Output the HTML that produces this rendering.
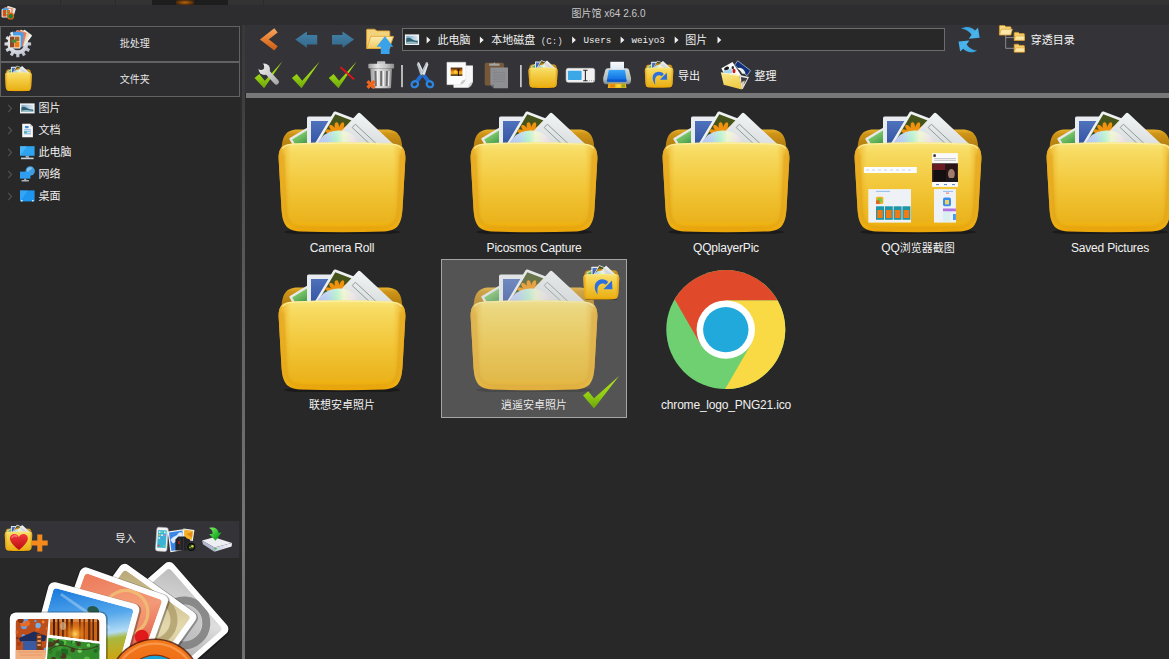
<!DOCTYPE html>
<html lang="zh-CN">
<head>
<meta charset="utf-8">
<title>图片馆 x64 2.6.0</title>
<style>
*{box-sizing:border-box;margin:0;padding:0}
html,body{width:1169px;height:659px;overflow:hidden;background:#2d2d30}
body{position:relative;font-family:"Liberation Sans","Noto Sans CJK SC",sans-serif;color:#f1f1f1;font-size:12px}
.abs{position:absolute}
#topstrip{left:0;top:0;width:1169px;height:5px;background:linear-gradient(#333 0,#333 4px,#303032 5px)}
#topstrip i{position:absolute;top:0;height:4.5px}
#title{left:0;top:5px;width:1169px;height:20px;background:#2d2d30}
#title .t{position:absolute;left:0;width:1169px;top:2.2px;line-height:14px;text-align:center;font-size:10px;color:#c8c8c8;padding-left:48px}
#left{left:0;top:25px;width:242px;height:634px;background:linear-gradient(#2d2d30 0,#2d2d30 73px,#2b2b2b 73px)}
.bigbtn{position:absolute;left:0;width:240px;height:35px;border:1px solid #626262;background:#2d2d30}
.bigbtn .lbl{position:absolute;left:0;width:267.5px;text-align:center;top:10px;line-height:14px;font-size:10px;color:#e6e6e6}
#tree{left:0;top:97px;width:240px;height:424px;background:#282828}
.ti{position:absolute;left:0;height:22px;width:241px}
.ti .arr{position:absolute;left:7px;top:7px;width:5px;height:8px}
.ti .ic{position:absolute;left:20px;top:3px;width:16px;height:16px}
.ti .tx{position:absolute;left:38.6px;top:3.4px;font-size:11px;line-height:16px;color:#f1f1f1}
#import{left:0;top:521px;width:239px;height:37px;background:#343438}
#logo{left:0;top:558px;width:240px;height:101px;background:#282828;overflow:hidden}
#split{left:242px;top:25px;width:3px;height:634px;background:linear-gradient(#38383a 0%,#3e3e40 12%,#505050 28%,#646464 50%,#767676 80%,#6e6e6e 100%)}
#main{left:245px;top:25px;width:924px;height:634px;background:#282828}
#tb{left:245px;top:25px;width:924px;height:68px;background:#343438}
#tbbar{left:246px;top:93px;width:923px;height:5px;background:#787878}
#addr{left:402px;top:28px;width:543px;height:23px;border:1px solid #6c6c6c;background:#282828}
.cell{position:absolute;width:186px;height:159px}
.cell .nm{position:absolute;left:0;width:186px;top:140px;text-align:center;font-size:12px;letter-spacing:-0.2px;color:#f1f1f1;line-height:14px;white-space:nowrap}
.cell svg.f{position:absolute;left:27px;top:3px;width:132px;height:130px}
.selov{background:rgba(204,204,204,0.27);border:1px solid #a4a4a4}

#addrtx .a{position:absolute;top:32px;line-height:16px;white-space:nowrap;color:#f0f0f0}
.c{font-size:11px;font-family:"Liberation Sans","Noto Sans CJK SC",sans-serif}
.m{color:#dcdcdc;font-size:9.2px;font-family:"Liberation Mono","Noto Sans CJK SC",monospace}
#addrtx .a.m{top:32.5px}
.tbl{font-size:11px;line-height:16px;color:#f2f2f2;white-space:nowrap}
.cj{font-size:11px !important;letter-spacing:0 !important}
.r2 .nm{top:139.2px}
</style>
</head>
<body>
<svg width="0" height="0" style="position:absolute">
<defs>
<linearGradient id="gFront" x1="0" y1="0" x2="0" y2="1">
<stop offset="0" stop-color="#fae67e"/><stop offset="0.1" stop-color="#f7db62"/><stop offset="0.5" stop-color="#f2c638"/><stop offset="0.86" stop-color="#eab41e"/><stop offset="0.93" stop-color="#f1b210"/><stop offset="1" stop-color="#eaa308"/>
</linearGradient>
<linearGradient id="gFrontSide" x1="0" y1="0" x2="1" y2="0">
<stop offset="0" stop-color="#e59a0c" stop-opacity="0.85"/><stop offset="0.1" stop-color="#eeb020" stop-opacity="0"/><stop offset="0.9" stop-color="#eeb020" stop-opacity="0"/><stop offset="1" stop-color="#e59a0c" stop-opacity="0.85"/>
</linearGradient>
<linearGradient id="gBack" x1="0" y1="0" x2="0" y2="1">
<stop offset="0" stop-color="#e8b22c"/><stop offset="0.12" stop-color="#cf9418"/><stop offset="0.5" stop-color="#b07a0c"/><stop offset="1" stop-color="#8a5804"/>
</linearGradient>
<linearGradient id="gCD" x1="0" y1="0" x2="1" y2="0">
<stop offset="0" stop-color="#b9b4e6"/><stop offset="0.25" stop-color="#a9c6f0"/><stop offset="0.45" stop-color="#a6ecc2"/><stop offset="0.6" stop-color="#e9f3c4"/><stop offset="0.78" stop-color="#eadfe0"/><stop offset="1" stop-color="#cfd2d6"/>
</linearGradient>
<linearGradient id="gCDfade" x1="0" y1="0" x2="0" y2="1">
<stop offset="0" stop-color="#fff" stop-opacity="0.35"/><stop offset="0.4" stop-color="#fff" stop-opacity="0"/>
</linearGradient>
<linearGradient id="gBlue" x1="0" y1="0" x2="0" y2="1">
<stop offset="0" stop-color="#4f72bd"/><stop offset="1" stop-color="#2f4f9c"/>
</linearGradient>
<linearGradient id="gGreen" x1="0" y1="0" x2="0" y2="1">
<stop offset="0" stop-color="#7cc66a"/><stop offset="1" stop-color="#1f7a34"/>
</linearGradient>
<linearGradient id="gDoc" x1="0" y1="0" x2="1" y2="1">
<stop offset="0" stop-color="#f2f5f5"/><stop offset="1" stop-color="#c3c9c9"/>
</linearGradient>
<filter id="fBlur" x="-10%" y="-10%" width="120%" height="120%"><feGaussianBlur stdDeviation="1.3"/></filter>
<clipPath id="cdClip"><rect x="30" y="20" width="70" height="20"/></clipPath>
<clipPath id="flClip"><rect x="2.6" y="2.6" width="28.8" height="34"/></clipPath>
<symbol id="folder" viewBox="0 0 132 130">
<ellipse cx="66" cy="128" rx="58" ry="3.5" fill="#000" opacity="0.35"/>
<path d="M5.5 54 C5 34 8 25.5 22 25.5 L110 25.5 C124 25.5 127 34 126.5 54 L126.5 62 L5.5 62 Z" fill="url(#gBack)"/>
<g transform="translate(13 34.6) rotate(-31)"><rect width="24" height="22" rx="1" fill="#e4eaea"/><rect x="2.3" y="2.3" width="21" height="18" fill="url(#gGreen)"/></g>
<rect x="31" y="12.6" width="26" height="34" rx="1.6" fill="#e8ecf0"/><rect x="35" y="17" width="22" height="28" fill="url(#gBlue)"/>
<g transform="matrix(0.934 0.358 -0.508 0.862 58.2 7)"><rect width="34" height="40" rx="1.6" fill="#eef1f1"/><rect x="2.6" y="2.6" width="28.8" height="34" fill="#46541c"/><g clip-path="url(#flClip)" fill="#f0920e"><ellipse cx="7.4" cy="21.5" rx="5.6" ry="2.1" transform="rotate(180 7.4 21.5)"/><ellipse cx="8.3" cy="17.6" rx="5.6" ry="2.1" transform="rotate(207 8.3 17.6)"/><ellipse cx="10.9" cy="14.5" rx="5.6" ry="2.1" transform="rotate(234 10.9 14.5)"/><ellipse cx="14.7" cy="13.0" rx="5.6" ry="2.1" transform="rotate(261 14.7 13.0)"/><ellipse cx="18.7" cy="13.3" rx="5.6" ry="2.1" transform="rotate(288 18.7 13.3)"/><ellipse cx="22.1" cy="15.4" rx="5.6" ry="2.1" transform="rotate(315 22.1 15.4)"/><circle cx="16" cy="21.5" r="3.6" fill="#c96a08"/></g></g>
<g transform="translate(83.8 8.8) rotate(43)"><rect x="-1" width="52" height="34" rx="2" fill="url(#gDoc)"/><path d="M4.5 11.4H34M4.5 16H34M4.5 11.4V16" stroke="#8e9696" stroke-width="0.9" fill="none"/></g>
<g clip-path="url(#cdClip)"><circle cx="62.7" cy="51.1" r="24.6" fill="url(#gCD)"/><circle cx="62.7" cy="51.1" r="24.6" fill="url(#gCDfade)"/></g>
<path d="M2.6 54 C2.6 44 6 40 16 39.4 Q66 37.3 116 39.4 C126 40 129.4 44 129.4 54 L126.8 100 C126 119 123 126.8 108 127.4 Q66 129 24 127.4 C9 126.8 6 119 5.2 100 Z" fill="url(#gFront)"/>
<path d="M2.6 54 C2.6 44 6 40 16 39.4 Q66 37.3 116 39.4 C126 40 129.4 44 129.4 54 L126.8 100 C126 119 123 126.8 108 127.4 Q66 129 24 127.4 C9 126.8 6 119 5.2 100 Z" fill="url(#gFrontSide)"/>
<path d="M7 50 L9.4 100 C10 116 12 122.6 25 123.2 Q66 124.6 107 123.2 C120 122.6 122 116 122.6 100 L125 50" fill="none" stroke="#d89a14" stroke-width="2.2" opacity="0.55" filter="url(#fBlur)"/>
<path d="M6.5 44.5 C8.5 41.5 11 40.6 16 40.2 Q66 38.1 116 40.2 C121 40.6 123.5 41.5 125.5 44.5" stroke="#fdf2a8" stroke-width="1.1" fill="none" opacity="0.9"/>
</symbol>
</defs>
</svg>

<div id="topstrip" class="abs"><i style="left:60px;width:1px;background:#2a2a2a"></i><i style="left:115px;width:1px;background:#2a2a2a"></i><i style="left:263px;width:1px;background:#2a2a2a"></i><i style="left:152px;width:76px;background:#1d1d1d"></i><i style="left:176px;width:18px;background:radial-gradient(#b8640e,#4a2a0a 70%,#1d1d1d)"></i></div>
<div id="title" class="abs"><div class="t">图片馆 x64 2.6.0</div></div>

<div id="left" class="abs">
  <div class="bigbtn" style="top:1px;height:36px"><div class="lbl">批处理</div></div>
  <div class="bigbtn" style="top:37px"><div class="lbl">文件夹</div></div>
</div>
<div id="tree" class="abs">
  <div class="ti" style="top:0"><div class="tx">图片</div></div>
  <div class="ti" style="top:22px"><div class="tx">文档</div></div>
  <div class="ti" style="top:44px"><div class="tx">此电脑</div></div>
  <div class="ti" style="top:66px"><div class="tx">网络</div></div>
  <div class="ti" style="top:88px"><div class="tx">桌面</div></div>
</div>
<div id="import" class="abs"><div class="abs" style="left:115.4px;top:10.5px;font-size:10px;line-height:14px;color:#f1f1f1">导入</div></div>
<div id="logo" class="abs"></div>
<div id="split" class="abs"></div>

<div id="main" class="abs"></div>
<div id="tb" class="abs"></div>
<div id="tbbar" class="abs"></div>
<div id="addr" class="abs"></div>




<div id="addrtx">
<span class="a c" style="left:437.4px">此电脑</span>
<span class="a c" style="left:491.2px">本地磁盘<span class="m"> (C:)</span></span>
<span class="a m" style="left:583.6px">Users</span>
<span class="a m" style="left:631.6px">weiyo3</span>
<span class="a c" style="left:685.2px">图片</span>
</div>
<div class="abs tbl" style="left:678px;top:68px">导出</div>
<div class="abs tbl" style="left:754.4px;top:68px">整理</div>
<div class="abs tbl" style="left:1030.8px;top:32px">穿透目录</div>
<div id="grid">
<div class="cell" style="left:249px;top:101px"><svg class="f"><use href="#folder"/></svg><div class="nm">Camera Roll</div></div>
<div class="cell" style="left:441px;top:101px"><svg class="f"><use href="#folder"/></svg><div class="nm">Picosmos Capture</div></div>
<div class="cell" style="left:633px;top:101px"><svg class="f"><use href="#folder"/></svg><div class="nm">QQplayerPic</div></div>
<div class="cell" style="left:825px;top:101px"><svg class="f"><use href="#folder"/></svg><div class="nm">QQ<span class="cj">浏览器截图</span></div></div>
<div class="cell" style="left:1017px;top:101px"><svg class="f"><use href="#folder"/></svg><div class="nm">Saved Pictures</div></div>
<div class="cell r2" style="left:249px;top:259px"><svg class="f"><use href="#folder"/></svg><div class="nm cj">联想安卓照片</div></div>
<div class="cell r2" style="left:441px;top:259px"><svg class="f"><use href="#folder"/></svg><div class="nm cj">逍遥安卓照片</div></div>
<div class="cell r2" style="left:633px;top:259px"><div class="nm">chrome_logo_PNG21.ico</div></div>
</div>
<div class="abs selov" style="left:440.6px;top:259.1px;width:186.8px;height:159px"></div>
<svg id="ov" class="abs" style="left:0;top:0" width="1169" height="659" viewBox="0 0 1169 659">
<defs>
<linearGradient id="gChev" gradientUnits="userSpaceOnUse" x1="0" y1="28" x2="0" y2="51"><stop offset="0" stop-color="#f4a862"/><stop offset="0.5" stop-color="#e67e30"/><stop offset="1" stop-color="#c95a12"/></linearGradient>
<linearGradient id="gCheck" gradientUnits="userSpaceOnUse" x1="0" y1="61" x2="0" y2="89"><stop offset="0" stop-color="#b4e420"/><stop offset="0.6" stop-color="#90cc12"/><stop offset="1" stop-color="#6aa20a"/></linearGradient>
<linearGradient id="gArr" gradientUnits="userSpaceOnUse" x1="0" y1="31" x2="0" y2="48"><stop offset="0" stop-color="#4382a8"/><stop offset="1" stop-color="#34688a"/></linearGradient>
<linearGradient id="gFold2" x1="0" y1="0" x2="0" y2="1"><stop offset="0" stop-color="#fcecb2"/><stop offset="1" stop-color="#f1c860"/></linearGradient>
<linearGradient id="gTrash" x1="0" y1="0" x2="1" y2="0"><stop offset="0" stop-color="#9c9c9c"/><stop offset="0.35" stop-color="#e4e4e4"/><stop offset="0.7" stop-color="#c4c4c4"/><stop offset="1" stop-color="#8c8c8c"/></linearGradient>
<linearGradient id="gSilver" x1="0" y1="0" x2="1" y2="1"><stop offset="0" stop-color="#f2f2f2"/><stop offset="1" stop-color="#9a9a9a"/></linearGradient>
<linearGradient id="gPrBlue" x1="0" y1="0" x2="0" y2="1"><stop offset="0" stop-color="#36a6fa"/><stop offset="1" stop-color="#0a64dc"/></linearGradient>
<linearGradient id="gSun" x1="0" y1="0" x2="0" y2="1"><stop offset="0" stop-color="#3a1c04"/><stop offset="0.45" stop-color="#f08a10"/><stop offset="0.7" stop-color="#f6b020"/><stop offset="1" stop-color="#1c0c02"/></linearGradient>
</defs>
<!-- row 1 -->
<path d="M276 30.4 L264.4 39.4 L276 48.4" fill="none" stroke="url(#gChev)" stroke-width="5.5" stroke-linejoin="miter"/>
<polygon points="295.3,39.6 306.9,31.5 306.9,35 317.2,35 317.2,44.4 306.9,44.4 306.9,47.8" fill="url(#gArr)"/>
<polygon points="354.1,39.6 342.5,31.5 342.5,35 332,35 332,44.4 342.5,44.4 342.5,47.8" fill="url(#gArr)"/>
<g>
<path d="M366.6 48.4 V30 Q366.6 29.2 367.4 29.2 H374.4 L377.2 30.9 H389 Q389.8 30.9 389.8 31.7 V48.4 Z" fill="#f3d27c" stroke="#e0a030" stroke-width="0.8"/>
<path d="M370.8 36.4 H393.6 L389.2 48.5 H366.9 Z" fill="url(#gFold2)" stroke="#e3a434" stroke-width="0.8" stroke-linejoin="round"/>
<polygon points="384.9,36.3 393.3,46.8 389.6,46.8 389.6,54.1 380.8,54.1 380.8,46.8 376.6,46.8" fill="#3aa2ea"/>
</g>
<!-- row 2 -->
<polygon points="254.5,78.1 259.3,74.0 264.8,80.8 282.3,61.6 264.1,88.3" fill="url(#gCheck)"/>
<g><defs><mask id="mWr" maskUnits="userSpaceOnUse" x="250" y="58" width="40" height="36"><rect x="250" y="58" width="40" height="36" fill="#fff"/><circle cx="261" cy="66.7" r="3.2" fill="#000"/></mask>
<linearGradient id="gWr" gradientUnits="userSpaceOnUse" x1="260" y1="64" x2="278" y2="84"><stop offset="0" stop-color="#f0f0f0"/><stop offset="0.5" stop-color="#cfcfcf"/><stop offset="1" stop-color="#a6a6a6"/></linearGradient></defs>
<g mask="url(#mWr)"><path d="M266.6 71.4 L276.4 81.9" stroke="url(#gWr)" stroke-width="5.2" stroke-linecap="round"/><circle cx="264.3" cy="69.3" r="5.7" fill="url(#gWr)"/></g></g>
<polygon points="291.9,78.1 296.7,74.0 302.2,80.8 319.7,61.6 301.5,88.3" fill="url(#gCheck)"/>
<polygon points="328.8,78.1 333.6,74.0 339.1,80.8 356.6,61.6 338.4,88.3" fill="url(#gCheck)"/>
<path d="M340.4 67.1 L354.1 79.4" stroke="#ea0f1e" stroke-width="1.9"/>
<g>
<rect x="377" y="61.2" width="8.3" height="3" rx="0.8" fill="#c4c4c4"/>
<rect x="368.3" y="63.8" width="25.8" height="4.6" rx="1" fill="url(#gTrash)"/>
<path d="M370.3 68.6 H392 L391 87.6 Q391 88.3 390.2 88.3 H372.2 Q371.4 88.3 371.4 87.6 Z" fill="url(#gTrash)"/>
<path d="M375.4 71 L375.8 86 M381.2 71 V86 M387 71 L386.6 86" stroke="#6e6e6e" stroke-width="2"/>
<path d="M377.6 71 L377.9 86 M383.4 71 V86 M389 71 L388.6 86" stroke="#f6f6f6" stroke-width="1"/>
<path d="M367.4 81.2 L374.6 87.8 M374.6 81.2 L367.4 87.8" stroke="#f0641c" stroke-width="3.2"/>
</g>
<rect x="401.2" y="65" width="1.6" height="22.2" fill="#d6d6d6"/>
<!-- scissors -->
<g>
<path d="M417.9 62 L416.9 64.5 L420.6 75.5 L424.4 73.4 L419.2 62.6 Z" fill="#b4bcc6"/>
<path d="M418.4 62.6 L423.6 73.6" stroke="#f2f4f6" stroke-width="0.8"/>
<path d="M427.3 62 L428.3 64.5 L424.6 75.5 L420.8 73.4 L426 62.6 Z" fill="#dde2e8"/>
<path d="M426.6 63.4 L422 73.4" stroke="#8e98a4" stroke-width="0.7"/>
<path d="M421.4 75.4 L416.8 81.2" stroke="#1f6cd2" stroke-width="3.8"/>
<path d="M423.8 75.4 L428.4 81.2" stroke="#1f6cd2" stroke-width="3.8"/>
<ellipse cx="414.8" cy="84.2" rx="3.3" ry="2.9" fill="none" stroke="#2b86e4" stroke-width="2.2" transform="rotate(-30 414.8 84.2)"/>
<ellipse cx="429.9" cy="84.2" rx="3.3" ry="2.9" fill="none" stroke="#2b86e4" stroke-width="2.2" transform="rotate(30 429.9 84.2)"/>
<circle cx="422.6" cy="75" r="0.9" fill="#7a8692"/>
</g>
<!-- copy -->
<g>
<path d="M453.5 65.6 H472.9 V82 Q470 83.5 468.4 87.8 H453.5 Z" fill="#f7f7f7"/>
<path d="M472.9 82 Q468.6 82.4 468.4 87.8 Q471.6 86.6 472.9 82Z" fill="#cfcfcf"/>
<path d="M446.9 62.2 H465.8 V79.4 Q462.6 80.6 460.4 84.7 H446.9 Z" fill="#fdfdfd" stroke="#d8d8d8" stroke-width="0.4"/>
<path d="M465.8 79.4 Q461 79.6 460.4 84.7 Q464 83.6 465.8 79.4Z" fill="#c8c8c8"/>
<rect x="450.7" y="67.6" width="11.7" height="8.2" fill="url(#gSun)"/>
<circle cx="455.4" cy="71.8" r="1.6" fill="#ffd23a"/>
<path d="M458.5 75.8 V69.5 M457 70.2 L458.5 69.5 L460.3 70.3" stroke="#1c0c02" stroke-width="0.9" fill="none"/>
</g>
<!-- clipboard -->
<g>
<rect x="484.7" y="62.8" width="19.4" height="22.6" rx="1.6" fill="#75583a"/>
<path d="M489.2 65.8 V63.6 H493.4 Q494.4 61.2 495.4 63.6 H499.6 V65.8 Z" fill="#a4a4a4"/>
<path d="M490.4 67.6 H508 V88.2 H494 L490.4 84.8 Z" fill="#8d8f93"/>
<path d="M490.4 84.8 H494 V88.2 Z" fill="#6e7074"/>
<path d="M493 70.4 H497 M493 72.6 H505 M493 74.8 H505 M493 77 H505 M493 79.2 H505 M493 81.4 H505" stroke="#7c7e84" stroke-width="0.6"/>
</g>
<rect x="520.1" y="65" width="1.6" height="22.2" fill="#d6d6d6"/>
<!-- folder small -->
<use href="#folder" x="527.9" y="58.6" width="30.3" height="29.8"/>
<!-- rename -->
<g>
<rect x="566.1" y="68.3" width="28.6" height="14" rx="2.2" fill="#f1f1f1" stroke="#cfcfcf" stroke-width="0.6"/>
<rect x="567.9" y="70.7" width="13.7" height="9.4" rx="0.8" fill="#3aa8e6"/>
<path d="M585.4 70.4 V80.6 M583.2 70.2 H587.6 M583.2 80.8 H587.6" stroke="#2c2c2c" stroke-width="1.1"/>
<path d="M589 80.6 H590 M591 80.6 H592 M593 80.6 H594" stroke="#9a9a9a" stroke-width="0.8"/>
</g>
<!-- printer -->
<g>
<defs><linearGradient id="gPrBody" x1="0" y1="0" x2="0" y2="1"><stop offset="0" stop-color="#d4dcdc"/><stop offset="0.7" stop-color="#aebaba"/><stop offset="1" stop-color="#7c8888"/></linearGradient>
<linearGradient id="gPaper" x1="0" y1="0" x2="0" y2="1"><stop offset="0" stop-color="#fafafa"/><stop offset="1" stop-color="#dceaf4"/></linearGradient></defs>
<path d="M607.6 68.3 H627 Q628.4 68.3 629 69.8 L631 77.8 Q631.6 84 628.4 84.2 H605.8 Q602.6 84 603.2 77.8 L605.4 69.8 Q606 68.3 607.6 68.3Z" fill="url(#gPrBody)"/>
<path d="M610.3 61.8 H624 V69.4 H610.3 Z" fill="url(#gPaper)"/>
<path d="M609.6 70 H624.4 Q625 70 625.2 70.8 L626.5 80.6 Q626.6 81.8 625.4 81.8 H608 Q606.8 81.8 606.9 80.6 L608.6 70.8 Q608.8 70 609.6 70Z" fill="url(#gPrBlue)"/>
<path d="M607.2 79.4 H626.2 L626.5 80.6 Q626.6 81.8 625.4 81.8 H608 Q606.8 81.8 606.9 80.6Z" fill="#0c58cc"/>
<path d="M608.4 83.6 H625.8 L626.4 88 H607.8 Z" fill="#f0b41c"/>
<path d="M610 84.2 H615 L614.6 87.6 H609.6Z" fill="#e8860c"/><path d="M616.4 84.2 H620.4 L620.6 87.6 H616.2Z" fill="#f4d83a"/><path d="M621.6 84.2 H624.8 L625.2 87.6 H621.8Z" fill="#8aa82a"/>
<circle cx="628.2" cy="76" r="0.7" fill="#b6e23a"/>
</g>
<!-- export folder -->
<use href="#folder" x="644.2" y="59" width="29.7" height="29.2"/>
<g>
<path d="M655.2 84.8 C651.8 80 651.8 74.6 655.6 72.6 C658.6 71 661.8 71.8 663.8 74 L661.8 76.2 C660.4 75 658.4 74.8 657 75.8 C654.8 77.4 654.8 80.6 655.2 84.8 Z" fill="#2d6fe0"/>
<polygon points="666.8,72.7 667.1,79.7 659.9,79.7" fill="#2d6fe0"/>
</g>

<!-- organize icon -->
<g>
<polygon points="721.4,68.3 732.5,61.9 741.4,75.8 725,76" fill="#fbfbfb"/>
<ellipse cx="726.6" cy="68.6" rx="2.6" ry="1.7" fill="#1a1a1a" transform="rotate(-25 726.6 68.6)"/>
<polygon points="723.4,71 731.5,68.6 732.4,73 724.4,75" fill="#a8d4f0"/>
<ellipse cx="734" cy="71" rx="1.5" ry="2.2" fill="#c41a1a"/><ellipse cx="732.8" cy="67.6" rx="1.2" ry="1.6" fill="#2a2a2a"/>
<polygon points="734.6,65.2 737.7,60.8 750.6,70.6 747,75.7" fill="#10307a" stroke="#c8cce0" stroke-width="0.7"/>
<path d="M737.2 68.6 C740.2 66.2 744 68.6 745.6 73.4 L742.2 73.8 C741 71 739.4 69.8 737.2 68.6Z" fill="#f1f1ec"/>
<polygon points="739.2,75 749,77.1 742.8,89 741.2,88.8" fill="#e8e8e8"/>
<polygon points="741,77 747.4,78.2 744,84 741.4,82.8" fill="#3a3a40"/>
<polygon points="741.6,82 745,80.4 742.6,88 741.6,87.6" fill="#d8c8a8"/>
<polygon points="720.9,72.5 739.2,75 741.8,89.5 723.7,84.8" fill="url(#gFold3)"/><defs><linearGradient id="gFold3" x1="0" y1="0" x2="0.3" y2="1"><stop offset="0" stop-color="#fbe98c"/><stop offset="1" stop-color="#f0cc48"/></linearGradient></defs>
<polygon points="720.9,72.5 739.2,75 739.4,76.2 721.1,73.6" fill="#fdf3c0"/>
</g>
<!-- refresh -->
<defs><linearGradient id="gRef" gradientUnits="userSpaceOnUse" x1="958" y1="27" x2="981" y2="52"><stop offset="0" stop-color="#2f98d8"/><stop offset="0.5" stop-color="#4ab6ec"/><stop offset="1" stop-color="#2f98d8"/></linearGradient></defs>
<g fill="url(#gRef)">
<path id="refA" d="M961.2 28.8 C965.4 25.8 971.4 26.4 975 30.4 L978 27.8 L979.7 37.7 L968.8 38.8 L971.6 34.8 C969 31 965.4 29.2 961.2 28.8 Z"/>
<path d="M961.2 28.8 C965.4 25.8 971.4 26.4 975 30.4 L978 27.8 L979.7 37.7 L968.8 38.8 L971.6 34.8 C969 31 965.4 29.2 961.2 28.8 Z" transform="rotate(180 969.1 39.6)"/>
</g>
<!-- folder tree -->
<g>
<path d="M1005.7 35 V48.3 H1014 M1005.7 37.6 H1014" fill="none" stroke="#8c8c8c" stroke-width="1"/>
<path d="M999.4 34.8 V26.2 Q999.4 25.5 1000.1 25.5 H1004.6 L1005.8 26.8 H1010.4 Q1011 26.8 1011 27.4 V34.8 Z" fill="#f6d77c" stroke="#d9992a" stroke-width="0.7"/>
<path d="M1001.4 29.2 H1012.4 L1010.6 34.9 H999.5 Z" fill="#fbe9ae" stroke="#dda030" stroke-width="0.7" stroke-linejoin="round"/>
<g id="sf1"><path d="M1014.2 40.3 V33 Q1014.2 32.4 1014.8 32.4 H1018.4 L1019.4 33.6 H1023.8 Q1024.4 33.6 1024.4 34.2 V40.3 Z" fill="#f4cf6a" stroke="#d9992a" stroke-width="0.7"/>
<path d="M1015.6 36 H1024.4 V40.3 H1014.3 Z" fill="#fbe7a4" stroke="#dda030" stroke-width="0.6" stroke-linejoin="round"/></g>
<use href="#sf1" y="11.8"/>
</g>
<!-- address icon + arrows -->
<g>
<rect x="404.9" y="34.4" width="14.2" height="10.6" fill="#f2f2f2"/>
<rect x="406.3" y="35.8" width="11.4" height="7.6" fill="url(#gSkyS)"/>
<path d="M406.3 38.6 Q409.4 36.6 412.4 39.4 Q415 40.8 417.7 40.6 V43.4 H406.3Z" fill="#2e6272"/>
<path d="M406.3 42 Q411 40.8 417.7 42.4 V43.4 H406.3Z" fill="#9cc0c8"/>
<g fill="#f0f0f0"><path id="tri" d="M426.6 36.6 L430.4 40 L426.6 43.4Z"/><use href="#tri" x="53.3"/><use href="#tri" x="145.5"/><use href="#tri" x="194"/><use href="#tri" x="248.1"/><use href="#tri" x="290.9"/></g>
</g>

<!-- app icon -->
<g>
<rect x="6" y="6.8" width="9" height="8" rx="0.8" fill="#e8e8e8" transform="rotate(18 10 11)"/>
<rect x="4" y="7.6" width="9" height="8" rx="0.8" fill="#f0a078" transform="rotate(8 8 11)"/>
<rect x="1.6" y="9" width="9.4" height="8.6" rx="0.8" fill="#f4f4f4"/>
<rect x="2.6" y="10" width="3.4" height="6.6" fill="#c8561c"/><rect x="6.4" y="10" width="3.8" height="3" fill="#b87a30"/><rect x="6.4" y="13.4" width="3.8" height="3.2" fill="#3e8a34"/>
<rect x="2.6" y="8.2" width="6" height="1.8" fill="#4aa0e0"/>
<circle cx="10.6" cy="16" r="3.6" fill="#e2620e"/><circle cx="10.8" cy="16.2" r="2.2" fill="#15803c"/>
</g>
<!-- gear icon -->
<defs><radialGradient id="gGear" cx="0.4" cy="0.35" r="0.8"><stop offset="0" stop-color="#f4f6fa"/><stop offset="0.6" stop-color="#cfd3dc"/><stop offset="1" stop-color="#a8acb8"/></radialGradient></defs>
<g>
<path d="M31.1 42.4 L31.1 45.4 L28.1 45.5 L27.5 47.6 L30.1 49.2 L28.6 51.9 L25.9 50.4 L24.3 52.0 L25.8 54.7 L23.1 56.2 L21.5 53.6 L19.4 54.2 L19.3 57.2 L16.3 57.2 L16.2 54.2 L14.1 53.6 L12.5 56.2 L9.8 54.7 L11.3 52.0 L9.7 50.4 L7.0 51.9 L5.5 49.2 L8.1 47.6 L7.5 45.5 L4.5 45.4 L4.5 42.4 L7.5 42.3 L8.1 40.2 L5.5 38.6 L7.0 35.9 L9.7 37.4 L11.3 35.8 L9.8 33.1 L12.5 31.6 L14.1 34.2 L16.2 33.6 L16.3 30.6 L19.3 30.6 L19.4 33.6 L21.5 34.2 L23.1 31.6 L25.8 33.1 L24.3 35.8 L25.9 37.4 L28.6 35.9 L30.1 38.6 L27.5 40.2 L28.1 42.3Z" fill="url(#gGear)"/>
<circle cx="17.8" cy="43.9" r="6.4" fill="#3a3a40"/>
<rect x="19" y="31" width="10" height="14" rx="0.8" fill="#efefef" transform="rotate(38 24 38)"/>
<rect x="17" y="31" width="10" height="14" rx="0.8" fill="#e8dcb8" transform="rotate(26 22 38)"/>
<rect x="15" y="31.2" width="10" height="14.4" rx="0.8" fill="#f0785a" transform="rotate(15 20 38)"/>
<rect x="12.6" y="32" width="10.4" height="14.6" rx="0.8" fill="#4a9ee6" transform="rotate(7 18 39)"/>
<rect x="8.9" y="35.6" width="11.6" height="12.8" rx="0.8" fill="#f2f2f2"/>
<rect x="9.9" y="36.6" width="4.4" height="10.8" fill="#8a4a2a"/><rect x="14.7" y="36.6" width="4.8" height="4.4" fill="#a86a24"/><rect x="14.7" y="41.4" width="4.8" height="6" fill="#f07e12"/><rect x="11.4" y="39.6" width="5" height="3" fill="#4a8a34"/>
</g>
<!-- folder btn icon -->
<use href="#folder" x="4.5" y="64.2" width="27.9" height="27.4"/>
<!-- tree arrows -->
<g fill="none" stroke="#505050" stroke-width="1.2"><path id="ta" d="M8.2 104.8 L11.6 108.5 L8.2 112.2"/><use href="#ta" y="22"/><use href="#ta" y="44"/><use href="#ta" y="66"/><use href="#ta" y="88"/></g>
<!-- tree icons -->
<g>
<defs><linearGradient id="gSkyS" x1="0" y1="0" x2="1" y2="0"><stop offset="0" stop-color="#7fa8cc"/><stop offset="1" stop-color="#dbe8f0"/></linearGradient></defs>
<rect x="20" y="103.4" width="14.6" height="10" fill="#f4f4f4"/><rect x="21.4" y="104.8" width="11.8" height="7.2" fill="url(#gSkyS)"/>
<path d="M21.4 107.4 Q24.4 105.6 27.4 108.2 Q30 109.6 33.2 109.4 V112 H21.4Z" fill="#2e6272"/><path d="M21.4 110.6 Q26 109.4 33.2 111 V112 H21.4Z" fill="#9cc0c8"/>
</g>
<g>
<path d="M22.2 123.8 H30 L32.9 126.6 V137.2 H22.2Z" fill="#f6f6f6"/><path d="M30 123.8 V126.6 H32.9Z" fill="#c8c8c8"/>
<rect x="25" y="126" width="3.6" height="2.2" fill="#3a8ee0"/><path d="M24 129.8 H31 M24 131.8 H31 M24 133.8 H31" stroke="#62a8e6" stroke-width="0.9"/><rect x="24" y="131.2" width="3" height="2" fill="#58b0a0"/>
</g>
<g>
<rect x="20" y="146.2" width="14.6" height="9.6" fill="#2ea4f0"/><path d="M20 155.8 L27 146.2 H20Z" fill="#5cc0fa" opacity="0.6"/>
<rect x="25.6" y="155.8" width="3.4" height="1.8" fill="#9ab4c8"/><rect x="21" y="157.6" width="12.6" height="1.6" fill="#c8d4dc"/>
</g>
<g>
<circle cx="30.2" cy="171" r="4.7" fill="#3f9ee0"/><path d="M27 168.6 Q29.6 166.6 32.6 167.8 Q31.4 170 29 170.4 Q28.6 172.6 30.8 174.4 Q28.6 175.4 26.8 174Z" fill="#8ccaf0" opacity="0.85"/>
<rect x="20" y="171.6" width="10.4" height="7" fill="#2e9ef0"/><rect x="24.2" y="178.6" width="2" height="1.6" fill="#9ab4c8"/><rect x="21.6" y="180.2" width="7.2" height="1.2" fill="#c8d4dc"/>
</g>
<g>
<rect x="20" y="190.4" width="14.6" height="11" fill="#1e96f0"/><path d="M20 201.4 L28 190.4 H20Z" fill="#4ab4f8" opacity="0.5"/><rect x="21" y="200" width="1.6" height="1.4" fill="#d8ecfa"/><rect x="32" y="200" width="1.6" height="1.4" fill="#d8ecfa"/>
</g>
<!-- import row icons -->
<g>
<use href="#folder" x="4.2" y="523.2" width="28.6" height="28.2"/>
<defs><linearGradient id="gHeart" x1="0" y1="0" x2="0" y2="1"><stop offset="0" stop-color="#f43a3a"/><stop offset="1" stop-color="#b80c10"/></linearGradient></defs>
<path d="M18.9 550 C9.6 543 9 538.2 10.8 535.8 C13 532.9 17.2 533.5 18.9 536.9 C20.6 533.5 24.8 532.9 27 535.8 C28.8 538.2 28.2 543 18.9 550Z" fill="url(#gHeart)"/>
<path d="M12 538 C12.4 535.6 15.2 535 17 536.8" stroke="#ff9a9a" stroke-width="1.3" fill="none" opacity="0.7"/>
<path d="M31.8 543 H47.7 M39.8 534.6 V551.4" stroke="#f48a1c" stroke-width="5"/>
</g>
<g>
<rect x="156.2" y="527.4" width="11.4" height="23.8" rx="2" fill="#f4f4f6" stroke="#b8b8c0" stroke-width="0.6" transform="rotate(4 162 539)"/>
<rect x="157.6" y="530.2" width="8.6" height="17.6" fill="#3ab4d4" transform="rotate(4 162 539)"/>
<g transform="rotate(4 162 539)" fill="#e8f6fa"><rect x="158.4" y="531.4" width="1.6" height="1.6"/><rect x="161" y="531.4" width="1.6" height="1.6" fill="#6ae07a"/><rect x="163.6" y="531.4" width="1.6" height="1.6"/><rect x="158.4" y="534.4" width="1.6" height="1.6" fill="#f0d040"/><rect x="161" y="534.4" width="1.6" height="1.6"/><rect x="163.6" y="534.4" width="1.6" height="1.6" fill="#e870c0"/><rect x="158.4" y="537.4" width="1.6" height="1.6"/><rect x="161" y="537.4" width="1.6" height="1.6" fill="#7080f0"/><rect x="158.4" y="545" width="1.6" height="1.6" fill="#e84a4a"/><rect x="163.6" y="545" width="1.6" height="1.6" fill="#5ae05a"/></g>
<polygon points="183.4,528.4 194.4,530 192.8,541 182,539" fill="#f6f6f6"/><polygon points="184.4,529.6 193.2,530.9 191.9,539.8 183.2,538.4" fill="#f4b428"/><polygon points="186,534 192.4,532 192,537.6" fill="#e88a18"/>
<polygon points="167.7,531.6 183.2,529.2 186.4,549.6 170.4,552.3" fill="#f8f8f8"/>
<polygon points="169,532.6 182.3,530.5 185.2,548.6 171.4,551" fill="#3a86e6"/>
<path d="M170.4 540 C173 535.4 177 536.6 178 533.4 C180 531.6 182 532.4 182.6 533.4 L183 537 C179 537.4 177.6 541.4 173 543.4 Z" fill="#eef4fc" opacity="0.9"/>
<path d="M175.4 539.6 L178.4 536.6 H185 L187 538.6 L190 539.6 V550.4 H175.4 Z" fill="#232326"/>
<rect x="178.2" y="541" width="1.6" height="3" fill="#c81c1c"/>
<path d="M180 537.6 V550 M183.4 538 V550" stroke="#3c3c40" stroke-width="0.8"/>
<circle cx="191.2" cy="546.9" r="4.7" fill="#0e0e10" stroke="#36363a" stroke-width="1"/><circle cx="191.2" cy="546.9" r="2.7" fill="#2a3a1a"/><circle cx="192.4" cy="546.2" r="1.2" fill="#d8e040"/><circle cx="190" cy="547.4" r="0.8" fill="#9ab82a"/>
</g>
<g>
<defs><linearGradient id="gDrv" x1="0" y1="0" x2="1" y2="0"><stop offset="0" stop-color="#c8cce0"/><stop offset="1" stop-color="#f4f4f8"/></linearGradient>
<linearGradient id="gGA" x1="0" y1="0" x2="1" y2="1"><stop offset="0" stop-color="#8af06a"/><stop offset="0.5" stop-color="#2cc030"/><stop offset="1" stop-color="#0e8a1a"/></linearGradient></defs>
<path d="M202 540.6 L214 537.2 L232 543 L214.4 547.6 Z" fill="#eceef2"/>
<path d="M202 540.6 L214.4 547.6 V551.8 L203 544.2 Z" fill="#b4b8d0"/>
<path d="M214.4 547.6 L232 543 L231.6 546.6 L214.4 551.8 Z" fill="url(#gDrv)"/>
<rect x="215" y="547.9" width="1.7" height="1.7" fill="#22d83a"/>
<path d="M209.2 527.9 C214 526.6 218.4 528.6 218.6 533 L221.4 532.6 L215.6 540.8 L209.2 534.2 L212.6 533.8 C212.8 531 211.6 529 209.2 527.9 Z" fill="url(#gGA)"/>
</g>
<!-- chrome -->
<g>
<circle cx="725.8" cy="329.6" r="59.5" fill="#6fd071"/>
<path d="M725.8 300.4 L777.64 300.4 A59.5 59.5 0 0 0 674.59 299.31 L700.51 344.2 Z" fill="#e04a2a"/>
<path d="M725.8 300.4 L777.64 300.4 A59.5 59.5 0 0 1 725.17 389.09 L751.09 344.2 Z" fill="#fada44"/>
<circle cx="725.8" cy="329.6" r="29.2" fill="#ffffff"/>
<circle cx="725.8" cy="329.6" r="22.7" fill="#22a9dc"/>
</g>
<!-- QQ thumbnails -->
<g transform="translate(852 104)">
<rect x="11.9" y="63" width="52.9" height="6" fill="#fbfcfe"/><path d="M14 66 H62" stroke="#c4d6f0" stroke-width="1" stroke-dasharray="3 3"/>
<rect x="80.1" y="49.1" width="25.8" height="33.8" fill="#fafafa"/><rect x="80.1" y="59.3" width="25.8" height="18.7" fill="#2a1416"/>
<rect x="81" y="60" width="12" height="6" fill="#6a1a22"/><ellipse cx="99.4" cy="70" rx="3.4" ry="5" fill="#a07c6c"/><rect x="94" y="74" width="11.9" height="4" fill="#1c1a1c"/><rect x="82" y="66" width="12" height="11" fill="#141012"/>
<rect x="81.4" y="50.4" width="2.4" height="2.4" fill="#222"/><path d="M82 54.6 H104 M82 56.4 H104" stroke="#b8b8b8" stroke-width="0.8"/><path d="M84 80.6 H87 M92 80.6 H95 M100 80.6 H103" stroke="#5a7ad0" stroke-width="1"/>
<rect x="16.3" y="85.1" width="42.7" height="33.5" fill="#eef2f6"/>
<rect x="24" y="92.8" width="7.3" height="7.3" rx="1.4" fill="#f0b020"/><circle cx="27.6" cy="96.4" r="2.4" fill="#6ad04a"/><rect x="24" y="96.4" width="3.6" height="3.7" fill="#e8501a" opacity="0.8"/>
<g><rect x="24" y="102.3" width="8" height="13.5" fill="#1e96a8"/><rect x="25.2" y="106" width="5.6" height="8" fill="#f07a14"/></g>
<g><rect x="32.8" y="102.3" width="8" height="13.5" fill="#1e96a8"/><rect x="34" y="106" width="5.6" height="8" fill="#f07a14"/></g>
<g><rect x="41.6" y="102.3" width="8" height="13.5" fill="#1e96a8"/><rect x="42.8" y="106" width="5.6" height="8" fill="#f07a14"/></g>
<g><rect x="50.4" y="102.3" width="8" height="13.5" fill="#1e96a8"/><rect x="51.6" y="106" width="5.6" height="8" fill="#f07a14"/></g>
<path d="M24 87.4 H38" stroke="#7ab0e8" stroke-width="0.8"/>
<rect x="82" y="85.1" width="21.9" height="33.5" fill="#eef2f6"/>
<rect x="91" y="93.5" width="8" height="8.8" rx="1.8" fill="#3a8ef0"/><rect x="93" y="96" width="4" height="4.4" fill="#f0d060"/>
<rect x="91" y="104.5" width="12.9" height="3" fill="#b070e0"/><rect x="91" y="107.5" width="7.4" height="10" fill="#d8f0f0"/><rect x="99.2" y="107.5" width="4.7" height="10" fill="#e8f0fa"/><rect x="101" y="110" width="2.9" height="6" fill="#4a9af0"/>
<path d="M91 87.4 H101" stroke="#7ab0e8" stroke-width="0.8"/><rect x="94" y="88.6" width="3" height="1" fill="#f06a6a"/>
</g>
<!-- selection extras -->
<g>
<use href="#folder" x="582.6" y="263.2" width="37.4" height="36.8"/>
<path d="M597.6 294.4 C593.6 289 593.8 283 598.2 280.4 C601.8 278.4 605.8 279.4 608.2 282 L605.8 284.8 C604.2 283.4 601.6 283 599.8 284.4 C597.2 286.4 597.2 290 597.6 294.4 Z" fill="#2d6fe0"/>
<polygon points="612,280.4 612.4,289.2 603.4,289.2" fill="#2d6fe0"/>
<polygon points="583,395.6 588.2,391.2 594,398.2 619,376 594,408.6" fill="url(#gCheck2)"/>
<defs><linearGradient id="gCheck2" gradientUnits="userSpaceOnUse" x1="0" y1="376" x2="0" y2="409"><stop offset="0" stop-color="#b4e420"/><stop offset="0.6" stop-color="#90cc12"/><stop offset="1" stop-color="#6aa20a"/></linearGradient></defs>
</g>

<!-- logo -->
<defs>
<linearGradient id="lgGray" x1="0" y1="0" x2="1" y2="1"><stop offset="0" stop-color="#bdbdbd"/><stop offset="0.5" stop-color="#dedede"/><stop offset="1" stop-color="#a2a2a2"/></linearGradient>
<linearGradient id="lgBeige" x1="0" y1="0" x2="1" y2="1"><stop offset="0" stop-color="#b9a877"/><stop offset="0.6" stop-color="#e4d9ae"/><stop offset="1" stop-color="#cdbf8e"/></linearGradient>
<linearGradient id="lgRed" x1="0" y1="0" x2="1" y2="1"><stop offset="0" stop-color="#ec7a5a"/><stop offset="0.5" stop-color="#f29a78"/><stop offset="1" stop-color="#e2503e"/></linearGradient>
<linearGradient id="lgSky" x1="0" y1="0" x2="0.6" y2="1"><stop offset="0" stop-color="#1678dc"/><stop offset="0.45" stop-color="#56a8ec"/><stop offset="0.7" stop-color="#b4dcf4"/><stop offset="0.78" stop-color="#a8b840"/><stop offset="1" stop-color="#c8a818"/></linearGradient>
<linearGradient id="lgRing" x1="0" y1="0" x2="0" y2="1"><stop offset="0" stop-color="#f47a1c"/><stop offset="1" stop-color="#d8480a"/></linearGradient>
<clipPath id="logoClip"><rect x="0" y="559" width="240" height="100"/></clipPath>
</defs>
<g clip-path="url(#logoClip)">
<g transform="translate(169.6 559.6) rotate(48.8)"><rect x="-1" y="-0.5" width="96" height="75" rx="7" fill="#000" opacity="0.3"/><rect width="93" height="72" rx="6" fill="#fdfdfd"/><clipPath id="cc1"><rect x="5.6" y="5.6" width="81.8" height="60.8" rx="4"/></clipPath><g clip-path="url(#cc1)"><rect x="5.6" y="5.6" width="81.8" height="60.8" fill="url(#lgGray)"/><circle cx="57" cy="31" r="22.5" fill="none" stroke="#7c7c7c" stroke-width="8" opacity="0.85"/><circle cx="57" cy="31" r="18" fill="#b4b4b4" opacity="0.5"/></g></g>
<g transform="translate(123.2 561.5) rotate(35.6)"><rect x="-1" y="-0.5" width="96" height="75" rx="7" fill="#000" opacity="0.3"/><rect width="93" height="72" rx="6" fill="#fdfdfd"/><clipPath id="cc2"><rect x="5.6" y="5.6" width="81.8" height="60.8" rx="4"/></clipPath><g clip-path="url(#cc2)"><rect x="5.6" y="5.6" width="81.8" height="60.8" fill="url(#lgBeige)"/><circle cx="57" cy="31" r="22.5" fill="none" stroke="#a89664" stroke-width="7" opacity="0.7"/></g></g>
<g transform="translate(82 565.7) rotate(19.5)"><rect x="-1" y="-0.5" width="96" height="75" rx="7" fill="#000" opacity="0.3"/><rect width="93" height="72" rx="6" fill="#fdfdfd"/><clipPath id="cc3"><rect x="5.6" y="5.6" width="81.8" height="60.8" rx="4"/></clipPath><g clip-path="url(#cc3)"><rect x="5.6" y="5.6" width="81.8" height="60.8" fill="url(#lgRed)"/><circle cx="57" cy="29.5" r="22" fill="#f6a070" opacity="0.45"/><circle cx="57" cy="29.5" r="22" fill="none" stroke="#f0bc74" stroke-width="3.2" opacity="0.9"/><circle cx="80" cy="47" r="7" fill="#e01a1a"/></g></g>
<g transform="translate(50 580.8) rotate(15.2)"><rect x="-1" y="-0.5" width="97" height="75" rx="7" fill="#000" opacity="0.3"/><rect width="94" height="72" rx="6" fill="#fdfdfd"/><clipPath id="cc4"><rect x="5.6" y="5.6" width="82.8" height="60.8" rx="4"/></clipPath><g clip-path="url(#cc4)"><rect x="5.6" y="5.6" width="82.8" height="60.8" fill="url(#lgSky)"/><ellipse cx="49.5" cy="17.5" rx="6" ry="4.5" fill="#24503a" opacity="0.9"/><path d="M14 10 L70 30" stroke="#e8f4fc" stroke-width="3" opacity="0.35"/></g></g>
<g>
<rect x="8.8" y="611.6" width="99" height="70" rx="7" fill="#000" opacity="0.3"/>
<rect x="9.8" y="612.6" width="96.2" height="70" rx="6" fill="#fdfdfd"/>
<defs>
<clipPath id="colL"><path d="M19.8 619 H48.6 L44.9 660 H15.8 V623 Q15.8 619 19.8 619Z"/></clipPath>
<clipPath id="colT"><path d="M50.3 619 H95.4 Q99.4 619 99.4 623 V641.2 L49.7 634.8Z"/></clipPath>
<clipPath id="colB"><path d="M48.7 638 L99.4 643.8 V660 H46.9Z"/></clipPath>
<radialGradient id="gSunGlow" gradientUnits="userSpaceOnUse" cx="75" cy="634" r="14"><stop offset="0" stop-color="#ffd860"/><stop offset="0.4" stop-color="#f08a1c" stop-opacity="0.7"/><stop offset="1" stop-color="#c85a14" stop-opacity="0"/></radialGradient>
</defs>
<g clip-path="url(#colL)"><rect x="15" y="618" width="35" height="42" fill="#bc4e1c"/><circle cx="23.4" cy="635.9" r="1.9" fill="#6a9ee0"/><circle cx="35.4" cy="621.0" r="1.2" fill="#6a9ee0"/><circle cx="24.0" cy="626.3" r="3.0" fill="#6a9ee0"/><circle cx="32.8" cy="636.0" r="1.9" fill="#a83c10"/><circle cx="23.2" cy="623.7" r="2.9" fill="#e86a24"/><circle cx="39.0" cy="639.8" r="1.3" fill="#e0702a"/><circle cx="25.3" cy="620.0" r="2.8" fill="#6a9ee0"/><circle cx="34.4" cy="647.5" r="1.9" fill="#e86a24"/><circle cx="28.2" cy="643.8" r="2.0" fill="#a83c10"/><circle cx="43.2" cy="622.0" r="1.4" fill="#f08a3a"/><circle cx="24.0" cy="639.8" r="2.6" fill="#7ab0e8"/><circle cx="29.1" cy="644.8" r="2.2" fill="#e86a24"/><circle cx="34.1" cy="647.0" r="2.4" fill="#e0702a"/><circle cx="42.5" cy="649.7" r="2.4" fill="#a83c10"/><circle cx="37.7" cy="629.1" r="2.2" fill="#d85a1c"/><circle cx="38.1" cy="625.5" r="2.7" fill="#7ab0e8"/><circle cx="24.8" cy="621.0" r="2.7" fill="#6a9ee0"/><circle cx="18.7" cy="643.8" r="1.9" fill="#a83c10"/><circle cx="16.6" cy="632.2" r="1.9" fill="#d85a1c"/><circle cx="17.4" cy="638.1" r="1.3" fill="#8a3008"/><circle cx="33.1" cy="647.6" r="1.7" fill="#f08a3a"/><circle cx="47.0" cy="628.6" r="1.3" fill="#e0702a"/><circle cx="45.4" cy="649.1" r="1.7" fill="#7ab0e8"/><circle cx="20.8" cy="620.3" r="2.8" fill="#8a3008"/><circle cx="27.2" cy="623.3" r="2.8" fill="#e86a24"/><circle cx="30.3" cy="635.1" r="2.4" fill="#d85a1c"/>
<polygon points="19,638 34,631.6 46.5,636 45,641 20,641.4" fill="#1c2c5c"/><rect x="23" y="641" width="14" height="10" fill="#3a5aa2"/><rect x="36.6" y="634" width="5" height="16" fill="#7a3a14"/><rect x="37.4" y="636" width="3.4" height="2" fill="#e8905a"/><rect x="37.4" y="640" width="3.4" height="2" fill="#e8905a"/><rect x="37.4" y="644" width="3.4" height="2" fill="#e8905a"/>
<rect x="15" y="650" width="32" height="10" fill="#f0b080"/><path d="M18 652 H44 M20 655 H42" stroke="#e89868" stroke-width="1"/></g>
<g clip-path="url(#colT)"><rect x="49" y="618" width="51" height="25" fill="#cc6418"/><rect x="49" y="618" width="51" height="4" fill="#e8a060" opacity="0.6"/><rect x="53.0" y="619" width="2.0" height="24" fill="#4a1c06"/><rect x="57.5" y="619" width="1.7" height="24" fill="#4a1c06"/><rect x="62.0" y="619" width="2.1" height="24" fill="#5a2408"/><rect x="66.0" y="619" width="2.3" height="24" fill="#6e2c0a"/><rect x="70.5" y="619" width="2.4" height="24" fill="#4a1c06"/><rect x="79.0" y="619" width="1.7" height="24" fill="#6e2c0a"/><rect x="83.5" y="619" width="1.4" height="24" fill="#6e2c0a"/><rect x="88.0" y="619" width="2.4" height="24" fill="#6e2c0a"/><rect x="92.5" y="619" width="1.4" height="24" fill="#4a1c06"/><rect x="97.0" y="619" width="2.0" height="24" fill="#5a2408"/><rect x="49" y="618" width="51" height="25" fill="url(#gSunGlow)"/><ellipse cx="63" cy="626" rx="3" ry="4" fill="#d8b890" opacity="0.7"/></g>
<g clip-path="url(#colB)"><rect x="46" y="636" width="54" height="24" fill="#348c2c"/><circle cx="50.2" cy="651.4" r="2.4" fill="#2a7a28"/><circle cx="95.6" cy="651.0" r="2.1" fill="#1f6a22"/><circle cx="48.2" cy="638.4" r="2.9" fill="#3c9a34"/><circle cx="60.3" cy="647.5" r="2.7" fill="#3c9a34"/><circle cx="56.4" cy="641.3" r="3.0" fill="#4a3a22"/><circle cx="78.6" cy="643.9" r="2.3" fill="#4a3a22"/><circle cx="90.1" cy="659.3" r="2.9" fill="#57b840"/><circle cx="63.4" cy="642.1" r="3.1" fill="#57b840"/><circle cx="64.4" cy="652.6" r="2.8" fill="#2f8a2a"/><circle cx="52.4" cy="644.4" r="2.2" fill="#4a3a22"/><circle cx="58.9" cy="655.6" r="3.4" fill="#2f8a2a"/><circle cx="64.8" cy="652.0" r="3.3" fill="#1f6a22"/><circle cx="61.3" cy="655.1" r="1.6" fill="#57b840"/><circle cx="63.7" cy="656.2" r="2.6" fill="#4a3a22"/><circle cx="61.8" cy="655.6" r="2.8" fill="#4a3a22"/><circle cx="79.8" cy="650.6" r="2.3" fill="#7ad060"/><circle cx="89.1" cy="643.2" r="2.2" fill="#1f6a22"/><circle cx="62.4" cy="650.1" r="1.6" fill="#1f6a22"/><circle cx="55.3" cy="637.1" r="3.4" fill="#7ad060"/><circle cx="99.3" cy="647.0" r="3.4" fill="#2a7a28"/><circle cx="58.8" cy="654.1" r="3.2" fill="#2a7a28"/><circle cx="86.6" cy="659.2" r="2.6" fill="#57b840"/><circle cx="92.7" cy="656.7" r="3.4" fill="#2f8a2a"/><circle cx="89.9" cy="638.0" r="3.3" fill="#2a7a28"/><circle cx="74.2" cy="641.6" r="3.3" fill="#1f6a22"/><circle cx="77.6" cy="637.3" r="3.0" fill="#57b840"/><circle cx="73.7" cy="642.5" r="1.5" fill="#7ad060"/><circle cx="68.9" cy="658.6" r="2.7" fill="#3c9a34"/><circle cx="53.6" cy="659.4" r="2.6" fill="#4a3a22"/><circle cx="88.5" cy="645.1" r="1.9" fill="#7ad060"/><circle cx="94.0" cy="639.7" r="2.0" fill="#3c9a34"/><circle cx="95.9" cy="655.5" r="3.1" fill="#2f8a2a"/><circle cx="72.8" cy="650.1" r="2.3" fill="#4a3a22"/><circle cx="61.4" cy="643.2" r="2.6" fill="#1f6a22"/><circle cx="49.7" cy="644.4" r="3.1" fill="#4a3a22"/><circle cx="49.9" cy="639.9" r="1.7" fill="#2f8a2a"/><circle cx="72.6" cy="637.8" r="2.9" fill="#7ad060"/><circle cx="73.6" cy="644.3" r="2.1" fill="#3c9a34"/><circle cx="67.4" cy="646.0" r="2.1" fill="#3c9a34"/><circle cx="57.1" cy="644.6" r="1.7" fill="#7ad060"/><path d="M49 650 Q60 642 72 648 Q84 652 98 646" stroke="#3c2c1c" stroke-width="1.2" fill="none" opacity="0.7"/></g>
</g>
<circle cx="155" cy="685" r="46.6" fill="#5a1c04" opacity="0.85"/>
<circle cx="155" cy="685" r="45" fill="url(#lgRing)"/>
<path d="M122 660 A41.5 41.5 0 0 1 188 660" fill="none" stroke="#ffb070" stroke-width="2.2" opacity="0.55"/>
<circle cx="155" cy="685" r="30.4" fill="#8a2c04"/>
<circle cx="155" cy="685" r="29.2" fill="#18a4d8"/>
</g>
</svg>
</body>
</html>
